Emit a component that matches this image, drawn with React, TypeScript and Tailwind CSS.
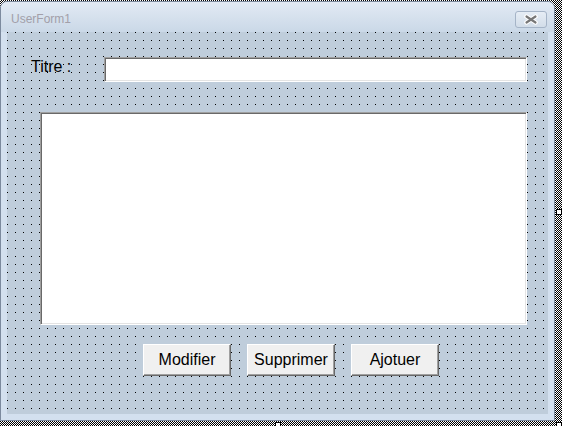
import type { ReactNode } from 'react';

// Fenêtre UserForm en mode conception (VBA), avec la trame de sélection autour.

const sunken =
  'border border-t-[#a0a0a0] border-l-[#a0a0a0] border-b-white border-r-white bg-white shadow-[inset_1px_1px_0_#696969,inset_-1px_-1px_0_#e3e3e3]';

function FormButton({ children }: { children: ReactNode }) {
  return (
    <button
      type="button"
      className="flex h-[32px] w-[88px] items-center justify-center border border-t-white border-l-white border-b-[#696969] border-r-[#696969] bg-[#f0f0f0] text-[16px] leading-[18px] text-black shadow-[inset_-1px_-1px_0_#a0a0a0]"
    >
      {children}
    </button>
  );
}

function Handle({ className }: { className: string }) {
  return <div className={`absolute h-[6px] w-[6px] border border-black bg-white ${className}`} />;
}

export default function App() {
  return (
    <div
      className="relative h-[426px] w-[562px] overflow-hidden bg-[conic-gradient(#000_25%,#fff_0_50%,#000_0_75%,#fff_0)] bg-[length:2px_2px] pt-px"
      style={{ fontFamily: '"Liberation Sans", Arial, sans-serif' }}
    >
      <div className="flex h-[420px] w-[555px] flex-col rounded-t-[7px] border border-[#7c8a9e] bg-[#d3e0ef]">
        {/* barre de titre */}
        <div className="flex h-[30px] items-start justify-between rounded-t-[6px] bg-[linear-gradient(#e2eaf4,#cad8e7)] pl-[10px] pr-[7px]">
          <span className="mt-[10px] text-[12px] leading-[14px] text-[#a29fa9]">UserForm1</span>
          <div className="mt-[9px] flex h-[17px] w-[32px] items-center justify-center rounded-[3px] border border-[#a5b4c7] bg-[linear-gradient(#e6edf5,#d2dde9)]">
            <svg width="16" height="11" viewBox="0 0 16 11">
              <path d="M3.5 2.5 L12.5 8.5 M12.5 2.5 L3.5 8.5" stroke="#fff" strokeWidth="4.5" strokeLinecap="round" />
              <path d="M3.5 2.5 L12.5 8.5 M12.5 2.5 L3.5 8.5" stroke="#777" strokeWidth="2.2" strokeLinecap="round" />
            </svg>
          </div>
        </div>

        {/* zone de conception quadrillée : un point noir tous les 8px */}
        <div className="mx-[6px] flex h-[382px] flex-col bg-[linear-gradient(90deg,transparent_1px,#bfcddb_1px),linear-gradient(#000_1px,#bfcddb_1px)] bg-[length:8px_8px] pt-[25px]">
          <div className="flex h-[25px] items-start">
            <span className="ml-[24px] mt-[1px] w-[73px] text-[16px] leading-[18px] text-black">Titre :</span>
            <div className={`h-[25px] w-[423px] ${sunken}`} />
          </div>

          <div className={`ml-[33px] mt-[30px] h-[213px] w-[487px] ${sunken}`} />

          <div className="ml-[136px] mt-[19px] flex gap-[16px]">
            <FormButton>Modifier</FormButton>
            <FormButton>Supprimer</FormButton>
            <FormButton>Ajotuer</FormButton>
          </div>
        </div>
      </div>

      {/* poignées de redimensionnement */}
      <Handle className="left-[556px] top-[209px]" />
      <Handle className="left-[275px] top-[422px]" />
      <Handle className="left-[556px] top-[422px]" />
    </div>
  );
}
